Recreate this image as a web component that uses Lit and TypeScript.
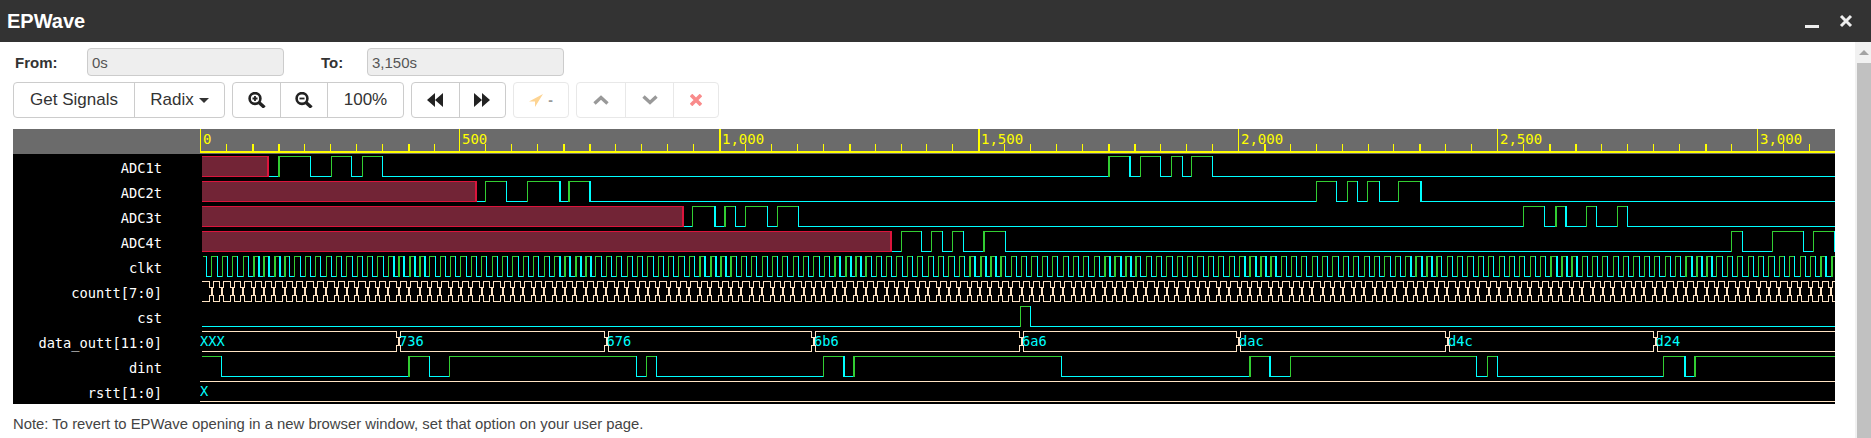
import { LitElement, html, css, svg } from "lit";
import { customElement } from "lit/decorators.js";

// page x of time 0, and pixels per time unit
const ORIGIN = 200;
const SCALE = 0.5189;
const WAVE_W = 1635;
const HIGH = 2;
const LOW = 22;
const CYAN = "#00ffff";
const GREEN = "#32cd32";
const BUS = "#ffe4c4";

// the source canvas is rescaled, so edges come out 2px wide in these bands
const THICK_BANDS = [252, 392, 558, 698, 833, 968, 1103, 1243, 1406, 1548, 1683, 1820];
const isThick = (x: number) => THICK_BANDS.some((b) => x >= b && x < b + 33);

const hline = (x1: number, x2: number, y: number, c: string) =>
  svg`<rect x=${x1 - ORIGIN} y=${y} width=${Math.max(x2 - x1, 0)} height="1" fill=${c}></rect>`;
const vline = (x: number, y1: number, y2: number, c: string, w = 1) =>
  svg`<rect x=${x - ORIGIN} y=${y1} width=${w} height=${y2 - y1} fill=${c}></rect>`;

// edges are page x values; level flips at each one
function digital(edges: number[], start: number, startHigh = false) {
  const out = [];
  let level = startHigh;
  let from = start;
  for (const raw of edges) {
    const x = Math.floor(raw);
    const w = isThick(x) ? 2 : 1;
    out.push(hline(from, x, level ? HIGH : LOW, level ? GREEN : CYAN));
    level = !level;
    out.push(vline(x, HIGH, LOW + 1, level ? GREEN : CYAN, w));
    from = x + w;
  }
  out.push(hline(from, 1840, level ? HIGH : LOW, level ? GREEN : CYAN));
  return out;
}

function unknown(end: number) {
  return svg`
    <rect x="2" y=${HIGH} width=${end - ORIGIN - 2} height="21" fill="#722436"></rect>
    ${hline(202, end, HIGH, "#dc143c")}
    ${hline(202, end, LOW, "#dc143c")}
    ${vline(end - 2, HIGH, LOW + 1, "#dc143c", 2)}`;
}

function bus(transitions: number[], start: number) {
  const out = [];
  let from = start;
  for (const raw of transitions) {
    const t = Math.round(raw);
    const l = t - 2;
    const r = t + 2;
    out.push(hline(from, l, HIGH, BUS), hline(from, l, LOW, BUS));
    // stepped crossing: corners come in to a 2px waist
    out.push(
      vline(l, HIGH, 9, BUS),
      vline(r, HIGH, 9, BUS),
      vline(l, 16, LOW + 1, BUS),
      vline(r, 16, LOW + 1, BUS),
      hline(l, r + 1, 8, BUS),
      hline(l, r + 1, 16, BUS),
      vline(t, 8, 17, BUS, 2)
    );
    from = r;
  }
  out.push(hline(from, 1840, HIGH, BUS), hline(from, 1840, LOW, BUS));
  return out;
}

const busValue = (x: number, text: string) =>
  svg`<text class="value" x=${x - ORIGIN} y="17">${text}</text>`;

const clockEdges: number[] = [];
for (let x = 201.5 + 5.19; x < 1835; x += 5.19) clockEdges.push(x);
const countEdges: number[] = [];
for (let x = 211; x < 1840; x += 10.38) countEdges.push(x);

const DATA_EDGES = [398, 605.5, 813, 1021, 1238, 1447, 1654.5];
const DATA_VALUES = ["736", "676", "6b6", "6a6", "dac", "d4c", "d24"];

const ROWS = [
  {
    name: "ADC1t",
    wave: () => [
      unknown(269),
      digital([278, 310, 331, 351, 362, 382, 1108.7, 1129, 1140, 1160.7, 1171.7, 1182, 1191.7, 1212.7], 269),
    ],
  },
  {
    name: "ADC2t",
    wave: () => [
      unknown(477),
      digital([485.7, 506.7, 527.7, 559, 568.7, 589, 1316.7, 1336.7, 1347.7, 1357.7, 1367.3, 1379, 1398.7, 1420], 477),
    ],
  },
  {
    name: "ADC3t",
    wave: () => [
      unknown(684),
      digital([692.7, 714, 724, 735.7, 745.7, 767, 777.3, 798, 1523.3, 1544, 1555, 1565, 1586.7, 1596.7, 1617.7, 1627.7], 684),
    ],
  },
  {
    name: "ADC4t",
    wave: () => [
      unknown(892),
      digital([901.7, 921.7, 931.7, 942.7, 952.3, 963, 983.3, 1005.3, 1731.7, 1742, 1772.7, 1803.7, 1813.7, 1834.3], 892),
    ],
  },
  { name: "clkt", wave: () => digital(clockEdges, 203, true) },
  { name: "countt[7:0]", wave: () => bus(countEdges, 202) },
  { name: "cst", wave: () => digital([1020.5, 1030.5], 202) },
  {
    name: "data_outt[11:0]",
    wave: () => [
      bus(DATA_EDGES, 202),
      busValue(200, "XXX"),
      DATA_EDGES.map((x, i) => busValue(x + 1, DATA_VALUES[i])),
    ],
  },
  {
    name: "dint",
    wave: () =>
      digital(
        [221.7, 408, 429.3, 449.7, 636, 646, 656, 823, 843.6, 853.6, 1061.8, 1249, 1269, 1290, 1476.7, 1487.3, 1497.3, 1663.7, 1684.7, 1694.7],
        202,
        true
      ),
  },
  {
    name: "rstt[1:0]",
    wave: () => [hline(200, 1840, HIGH, BUS), hline(200, 1840, LOW, BUS), busValue(200, "X")],
  },
];

function ruler() {
  const out = [];
  out.push(svg`<rect x="0" y="22" width=${WAVE_W} height="2" fill="#ffff00"></rect>`);
  for (let t = 0; t <= 3150; t += 50) {
    const x = Math.round(ORIGIN + t * SCALE);
    const w = isThick(x) ? 2 : 1;
    const major = t % 500 === 0;
    out.push(vline(x, major ? 0 : 15, 23, "#ffff00", w));
    if (major) {
      out.push(svg`<text class="tick" x=${x - ORIGIN + 3} y="15">${t.toLocaleString("en-US")}</text>`);
    }
  }
  return out;
}

const magnifier = (minus: boolean) => html`
  <svg width="18" height="16" viewBox="0 0 18 16" fill="none" stroke="#222">
    <circle cx="7" cy="6.5" r="5.4" stroke-width="2.6"></circle>
    <path d="M11 10.5 16.5 15.5" stroke-width="3.4"></path>
    <path d=${minus ? "M4.5 6.5h5" : "M4.5 6.5h5M7 4v5"} stroke-width="1.8"></path>
  </svg>
`;

@customElement("app-root")
export class AppRoot extends LitElement {
  static styles = css`
    :host {
      display: block;
      height: 438px;
      overflow: hidden;
      background: #fff;
      font-family: "Liberation Sans", Arial, sans-serif;
    }
    .titlebar {
      height: 42px;
      background: #333;
      color: #fff;
      display: flex;
      align-items: center;
      justify-content: space-between;
      padding: 0 18px 0 7px;
      box-sizing: border-box;
    }
    .title {
      font-size: 20px;
      font-weight: 700;
    }
    .controls {
      display: flex;
      align-items: center;
      gap: 20px;
    }
    .controls svg {
      display: block;
    }
    .body {
      display: flex;
      height: 396px;
    }
    .main {
      flex: 1;
      min-width: 0;
      padding: 6px 0 0 13px;
    }
    .range {
      display: flex;
      align-items: center;
      height: 28px;
      font-size: 15px;
      color: #333;
    }
    .range label {
      font-weight: 700;
      margin-left: 2px;
    }
    .range label.from {
      width: 72px;
    }
    .range label.to {
      width: 46px;
      margin-left: 37px;
    }
    .range input {
      width: 197px;
      height: 28px;
      box-sizing: border-box;
      padding: 0 4px;
      border: 1px solid #ccc;
      border-radius: 4px;
      background: #eee;
      color: #555;
      font: 15px "Liberation Sans", Arial, sans-serif;
    }
    .toolbar {
      display: flex;
      gap: 7px;
      height: 36px;
      margin-top: 6px;
    }
    .group {
      display: flex;
      border: 1px solid #ccc;
      border-radius: 4px;
      box-sizing: border-box;
      color: #333;
      font-size: 17px;
    }
    .group.off {
      border-color: #e8e8e8;
    }
    .btn {
      display: flex;
      align-items: center;
      justify-content: center;
      gap: 5px;
      box-sizing: border-box;
      border-left: 1px solid #ccc;
    }
    .off .btn {
      border-left-color: #e8e8e8;
    }
    .btn:first-child {
      border-left: 0;
    }
    .w-signals {
      width: 120px;
    }
    .w-radix {
      width: 90px;
    }
    .w-zoom {
      width: 47px;
    }
    .w-pct {
      width: 76px;
    }
    .w-step {
      width: 46.5px;
    }
    .w-mark {
      width: 54px;
    }
    .w-up {
      width: 48px;
    }
    .w-close {
      width: 45px;
    }
    .caret {
      width: 0;
      height: 0;
      border: 5px solid transparent;
      border-top-color: #333;
      border-bottom: 0;
    }
    .dash {
      color: #999;
      font-size: 14px;
      font-weight: 700;
    }
    .wave {
      width: 1822px;
      margin-top: 11px;
      background: #000;
    }
    .row {
      display: flex;
      height: 25px;
    }
    .row svg {
      display: block;
      flex: none;
    }
    .row.head {
      background: #6b6b6b;
    }
    .name {
      width: 187px;
      flex: none;
      box-sizing: border-box;
      padding-right: 38px;
      text-align: right;
      color: #fff;
      font: 13.7px/28px "DejaVu Sans Mono", monospace;
      white-space: nowrap;
    }
    .tick {
      fill: #ffff00;
      font: 14px "DejaVu Sans Mono", monospace;
    }
    .value {
      fill: #00ffff;
      font: 13.7px "DejaVu Sans Mono", monospace;
    }
    .note {
      margin: 12px 0 0;
      font-size: 14.85px;
      line-height: 16px;
      color: #444;
    }
    .scrollbar {
      width: 16px;
      flex: none;
      display: flex;
      flex-direction: column;
      background: #f1f1f1;
    }
    .arrow {
      height: 21px;
      display: flex;
      align-items: center;
      justify-content: center;
      padding-left: 2px;
      box-sizing: border-box;
    }
    .arrow span {
      width: 0;
      height: 0;
      border: 5px solid transparent;
      border-bottom-color: #a3a3a3;
      border-top: 0;
    }
    .thumb {
      flex: 1;
      margin-left: 2px;
      background: #c1c1c1;
    }
  `;

  render() {
    return html`
      <div class="titlebar">
        <span class="title">EPWave</span>
        <div class="controls">
          <svg width="14" height="14" viewBox="0 0 14 14"><rect x="0" y="11" width="14" height="3" fill="#eee"></rect></svg>
          <svg width="14" height="14" viewBox="0 0 14 14"><path d="M2 2l10 10M12 2 2 12" stroke="#eee" stroke-width="3"></path></svg>
        </div>
      </div>
      <div class="body">
        <div class="main">
          <div class="range">
            <label class="from">From:</label>
            <input disabled value="0s" />
            <label class="to">To:</label>
            <input disabled value="3,150s" />
          </div>
          <div class="toolbar">
            <div class="group">
              <div class="btn w-signals">Get Signals</div>
              <div class="btn w-radix">Radix<span class="caret"></span></div>
            </div>
            <div class="group">
              <div class="btn w-zoom">${magnifier(false)}</div>
              <div class="btn w-zoom">${magnifier(true)}</div>
              <div class="btn w-pct">100%</div>
            </div>
            <div class="group">
              <div class="btn w-step">
                <svg width="16" height="14" viewBox="0 0 16 14" fill="#222"><path d="M8 0v14L0 7zM16 0v14L8 7z"></path></svg>
              </div>
              <div class="btn w-step">
                <svg width="16" height="14" viewBox="0 0 16 14" fill="#222"><path d="M0 0v14l8-7zM8 0v14l8-7z"></path></svg>
              </div>
            </div>
            <div class="group off">
              <div class="btn w-mark">
                <svg width="14" height="13" viewBox="0 0 14 13" fill="#fdd493"><path d="M14 0 0 7.5h6V13z"></path></svg>
                <span class="dash">-</span>
              </div>
            </div>
            <div class="group off">
              <div class="btn w-up">
                <svg width="16" height="10" viewBox="0 0 16 10" fill="none" stroke="#999" stroke-width="3.4"><path d="M1.5 8.5 8 2.5l6.5 6"></path></svg>
              </div>
              <div class="btn w-up">
                <svg width="16" height="10" viewBox="0 0 16 10" fill="none" stroke="#999" stroke-width="3.4"><path d="M1.5 1.5 8 7.5l6.5-6"></path></svg>
              </div>
              <div class="btn w-close">
                <svg width="12" height="12" viewBox="0 0 12 12" fill="none" stroke="#f98b8b" stroke-width="3.6"><path d="M1 1l10 10M11 1 1 11"></path></svg>
              </div>
            </div>
          </div>
          <div class="wave">
            <div class="row head">
              <div class="name"></div>
              <svg width=${WAVE_W} height="25">${ruler()}</svg>
            </div>
            ${ROWS.map(
              (r) => html`
                <div class="row">
                  <div class="name">${r.name}</div>
                  <svg width=${WAVE_W} height="25">${r.wave()}</svg>
                </div>
              `
            )}
          </div>
          <p class="note">Note: To revert to EPWave opening in a new browser window, set that option on your user page.</p>
        </div>
        <div class="scrollbar">
          <div class="arrow"><span></span></div>
          <div class="thumb"></div>
        </div>
      </div>
    `;
  }
}
